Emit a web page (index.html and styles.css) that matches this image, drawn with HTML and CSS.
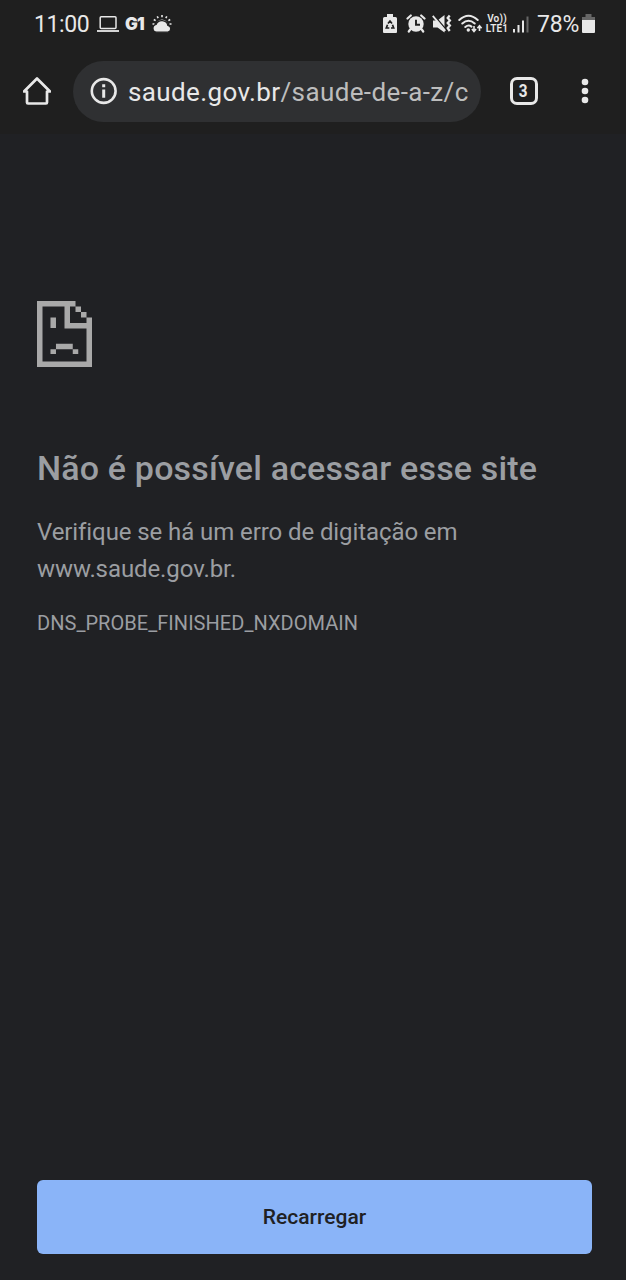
FILE: index.html
```
<!DOCTYPE html>
<html lang="pt-BR">
<head>
<meta charset="utf-8">
<title>saude.gov.br</title>
<link rel="stylesheet" href="styles.css">
</head>
<body>
<header class="status">
  <span class="clock">11:00</span>
  <svg class="laptop" width="22" height="20" viewBox="0 0 22 20" fill="none" stroke="currentColor" stroke-width="1.500"><rect x="3.200" y="2.800" width="15.800" height="11.800" rx="1"/><path d="M0 17h22" stroke-width="1.800"/></svg>
  <span class="gone">G1</span>
  <svg class="weather" width="20" height="20" viewBox="0 0 20 20"><path d="M4.500 11a5.500 5.500 0 0 1 11 0" fill="currentColor"/><path d="M10 1v2.200M5.200 2.300l1 1.800M14.800 2.300l-1 1.800M1.800 5.500l1.800 1.200M18.200 5.500l-1.800 1.200M.5 10h2M17.500 10h2" stroke="currentColor" stroke-width="1.600"/><path d="M4.500 18.200a3.900 3.900 0 0 1-.4-7.700 6.200 6.200 0 0 1 11.800 1 3.400 3.400 0 0 1 0 6.700z" fill="currentColor" stroke="#1f1f1f" stroke-width="1.200"/></svg>
  <div class="indicators">
    <svg width="14" height="20" viewBox="0 0 14 20"><path d="M4 0h6v3h2.500q1.500 0 1.500 1.500V18q0 1-1 1H1q-1 0-1-1V4.500Q0 3 1.500 3H4z" fill="currentColor"/><g fill="none" stroke="#1f1f1f" stroke-width="1.700"><path d="M5 9.500l2-2.500 2 2.500M4.500 10.800L3.300 14h3M9.500 10.800l1.200 3.200H8"/></g></svg>
    <svg class="alarm" width="20" height="20" viewBox="0 0 20 20"><g stroke="currentColor" stroke-width="2.200" stroke-linecap="round"><path d="M1.500 4.500l3.300-3M18.500 4.500l-3.300-3M4.200 15.500l-1.400 2M15.800 15.500l1.400 2"/></g><circle cx="10" cy="10" r="7.700" fill="currentColor"/><path d="M10 5.800v5h4" fill="none" stroke="#1f1f1f" stroke-width="1.900"/></svg>
    <svg class="mute" width="20" height="20" viewBox="0 0 20 20"><path d="M1 6.500h4.500L12.500 1v17.500l-7-5H1z" fill="currentColor"/><path d="M1.800 1L14 15.500" stroke="#1f1f1f" stroke-width="1.500"/><path d="M.8 1.800l12.500 15" stroke="currentColor" stroke-width="1.800"/><path d="M17.700 1.500l-2 2.500 2.200 2.500L15.700 9l2.200 2.500-2.200 2.500 2 3" fill="none" stroke="currentColor" stroke-width="2.300"/></svg>
    <svg class="wifi" width="25" height="20" viewBox="0 0 25 20"><g fill="none" stroke="currentColor" stroke-width="2" stroke-linecap="round"><path d="M1.300 6q9.200-8.500 18.400 0M4.300 9.500q6.200-5.600 12.400 0M7.300 13q3.200-2.800 6.200-.4"/></g><circle cx="10.300" cy="16" r="1.700" fill="currentColor"/><path d="M16 12v5M13.900 15l2.100 2.500 2.100-2.500M21.500 17v-5M19.400 14.200l2.100-2.500 2.100 2.500" fill="none" stroke="currentColor" stroke-width="1.600"/></svg>
    <span class="volte"><b>Vo))</b><b>LTE1</b></span>
    <svg class="signal" width="17" height="20" viewBox="0 0 17 20" fill="currentColor"><path d="M0 15h2v3.500H0zM4.500 11h2v7.500h-2zM9 6.500h2v12H9z"/><path d="M13.500 2.500h2v16h-2z" fill="#666"/></svg>
    <span class="percent">78%</span>
    <svg class="battery" width="13" height="20" viewBox="0 0 13 20"><path d="M3.500 0h6v3H13v4H0V3h3.500z" fill="#666"/><path d="M0 6h13v12q0 1-1 1H1q-1 0-1-1z" fill="currentColor"/></svg>
  </div>
</header>
<nav class="toolbar">
  <svg class="home" width="28" height="30" viewBox="0 0 28 30" fill="none" stroke="currentColor" stroke-width="2.700" stroke-linejoin="round"><path d="M1 15.500L14 2.500l13 13h-3V26.500q0 1-1 1H5q-1 0-1-1V15.500z"/></svg>
  <div class="address">
    <svg width="28" height="28" viewBox="0 0 28 28"><circle cx="13.700" cy="14" r="11.900" fill="none" stroke="currentColor" stroke-width="2.600"/><path d="M12.200 7.300h3v2.900h-3zM12.200 12.500h3v8.200h-3z" fill="currentColor"/></svg>
    <span class="url">saude.gov.br<i>/saude-de-a-z/c</i></span>
  </div>
  <span class="tabs"><b>3</b></span>
  <svg class="menu" width="8" height="26" viewBox="0 0 8 26" fill="currentColor"><circle cx="4" cy="4" r="3.300"/><circle cx="4" cy="13" r="3.300"/><circle cx="4" cy="22" r="3.300"/></svg>
</nav>
<main class="error">
  <svg class="sad" width="55" height="66" viewBox="0 0 10 12" fill="currentColor"><path d="M0 0H7V1H8V2H9V3H10V12H0ZM1 1V11H9V5H5V1ZM6 1V4H9V3H8V2H7V1Z" fill-rule="evenodd"/><path d="M2.450 3h1v1.900h-1zM3.450 7.750h3.050v1H3.450zM2.450 8.750h1v.9h-1zM6.500 8.750h1v.9h-1z"/></svg>
  <h1>Não é possível acessar esse site</h1>
  <p class="hint">Verifique se há um erro de digitação em<br>www.saude.gov.br.</p>
  <p class="code">DNS_PROBE_FINISHED_NXDOMAIN</p>
  <button class="reload">Recarregar</button>
</main>
</body>
</html>
```
FILE: styles.css
```
* { box-sizing: border-box; }
body {
  margin: 0;
  height: 1280px;
  display: flex;
  flex-direction: column;
  background: #202124;
  font-family: Roboto, sans-serif;
  color: #e8e8e8;
}
svg { flex: none; display: block; }
.status {
  height: 48px;
  padding: 0 31px 0 34px;
  display: flex;
  align-items: center;
  background: #1f1f1f;
}
.clock { width: 63px; font-size: 23px; letter-spacing: -.4px; line-height: 48px; padding-top: 2px; }
.gone {
  width: 28px;
  padding-left: 6px;
  font: 900 17px/20px Inter, sans-serif;
  letter-spacing: -.7px;
}
.weather { margin-left: 5px; }
.indicators { margin-left: auto; display: flex; align-items: center; }
.alarm { margin-left: 9px; }
.mute { margin-left: 6px; }
.wifi { margin-left: 6px; }
.volte {
  display: flex;
  flex-direction: column;
  align-items: center;
  width: 24px;
  margin-left: 2px;
  font-size: 10px;
  line-height: 10px;
}
.volte b { font-weight: 600; letter-spacing: .2px; }
.signal { margin-left: 4px; }
.percent { width: 45px; margin-left: 7px; font-size: 23px; letter-spacing: -.2px; line-height: 48px; padding-top: 2px; }
.toolbar {
  height: 86px;
  padding: 0 37px 0 23px;
  display: flex;
  align-items: center;
  background: #1f1f1f;
}
.address {
  width: 408px;
  height: 61px;
  margin-left: 22px;
  padding-left: 17px;
  display: flex;
  align-items: center;
  gap: 10px;
  border-radius: 31px;
  background: #2f3032;
}
.url { padding-top: 2px; font-size: 26px; letter-spacing: .38px; white-space: nowrap; }
.url i { font-style: normal; color: #bdbdbd; }
.tabs {
  display: flex;
  justify-content: center;
  width: 28px;
  height: 28px;
  margin-left: 28.500px;
  border: 3px solid;
  border-radius: 7px;
  font-size: 18px;
  line-height: 22px;
}
.tabs b { transform: scaleX(.85); }
.menu { margin-left: auto; }
.error {
  flex: 1;
  padding: 167px 34px 26px 37px;
  display: flex;
  flex-direction: column;
  color: #9b9ea2;
}
.sad { color: #a9a9a9; }
h1 { margin: 79px 0 0; font-size: 34px; letter-spacing: .17px; line-height: 44px; font-weight: 500; white-space: nowrap; }
.hint { margin: 24px 0 0; font-size: 24px; letter-spacing: -.09px; line-height: 37px; }
.code { margin: 22px 0 0; font-size: 20px; letter-spacing: .04px; line-height: 26px; }
.reload {
  height: 74px;
  margin-top: auto;
  border: 0;
  border-radius: 6px;
  background: #8ab4f8;
  color: #202124;
  font: 500 21px Roboto, sans-serif;
}
```
